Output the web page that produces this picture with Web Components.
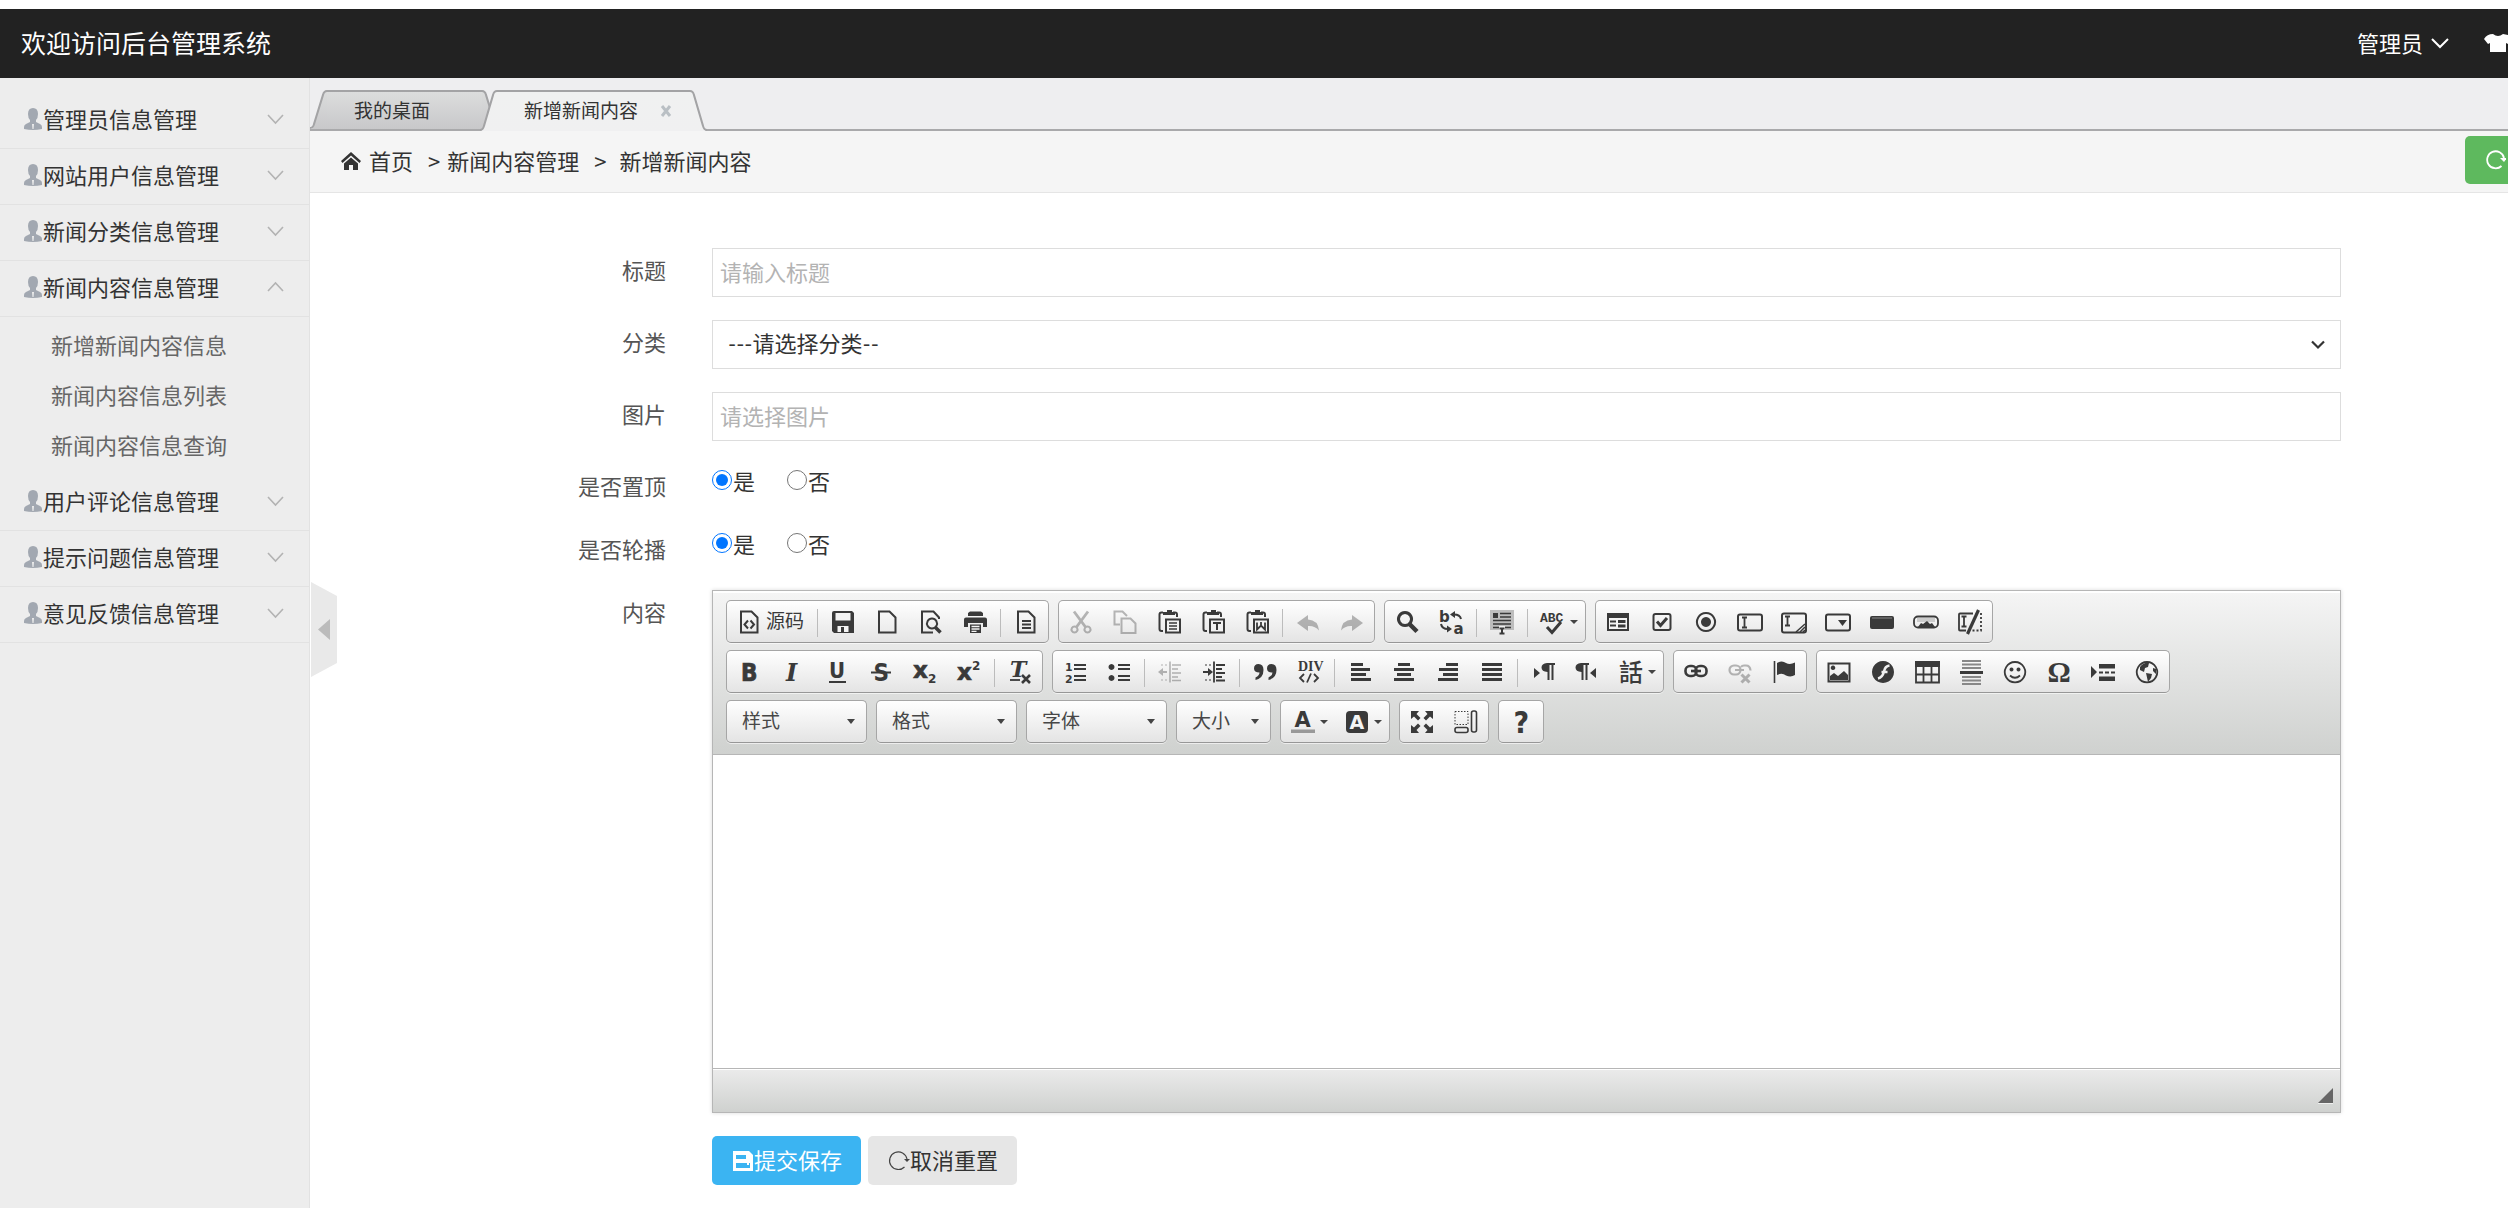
<!DOCTYPE html>
<html lang="zh-CN">
<head>
<meta charset="utf-8">
<title>新增新闻内容</title>
<style>
  html, body { margin: 0; background: #fff; }
  body { font: 22px/34px "Noto Sans CJK SC", sans-serif; color: #333; overflow: hidden; }
</style>
</head>
<body>
<admin-app></admin-app>

<script>
const define = (name, html, setup) => customElements.define(name, class extends HTMLElement {
  constructor() {
    super();
    const t = document.createElement('template');
    t.innerHTML = '<style>*{box-sizing:border-box}:host{display:block}[hidden]{display:none}button,input,select,textarea{font:inherit;color:inherit}button{cursor:pointer}a{color:inherit;text-decoration:none}svg{display:block}</style>' + html;
    this.attachShadow({ mode: 'open' }).append(t.content.cloneNode(true));
  }
  connectedCallback() { if (setup && !this.ready) { this.ready = true; setup(this, this.shadowRoot); } }
});

/* Toolbar glyphs, drawn on a 24 x 24 grid */
const S = (w, d) => `<path fill="none" stroke="currentColor" stroke-width="${w}" d="${d}"/>`;
const F = d => `<path fill="currentColor" d="${d}"/>`;
const T = (x, y, size, s, extra = '') => `<text x="${x}" y="${y}" font-size="${size}" fill="currentColor" ${extra}>${s}</text>`;
const DV = 'font-family="DejaVu Sans" font-weight="bold"';
const HEAVY = 'stroke="currentColor" stroke-width="0.7"';
const page = S(2, 'M4 1.5h10.5l6 6v15H4z');
const clip = S(2, 'M6 21H4.5q-2 0-2-2V4.5q0-2 2-2H6M16 2.5h2q2 0 2 2V7') + F('M6 5V2h4V0h5v2h3v3z') + '<rect x="8.5" y="9" width="15" height="14" fill="#f2f2f2"/>' + S(2, 'M9 9.5h14v13H9z');
const align = rows => rows.map((r, i) => F(`M${r[0]} ${3 + i * 5}h${r[1]}v3h-${r[1]}z`)).join('');
const ibeam = (x, y, h) => S(1.8, `M${x - 2.5} ${y}h5M${x} ${y}v${h}M${x - 2.5} ${y + h}h5`);
const ICONS = {
  source: page + S(2, 'M11 10.5l-3.5 4 3.5 4M13.5 10.5l3.5 4-3.5 4'),
  save: F('M3 1h18l2 2v20H3l-2-2V3a2 2 0 0 1 2-2z') + '<path fill="#f4f4f4" d="M4.5 3h15v7.5h-15zM6.5 16h11v6h-11z"/>' + F('M10 17h3v5h-3z'),
  newpage: page,
  preview: S(2, 'M20 9V7.5l-5.5-6H3v21h11') + S(2, 'M13 8.5a5 5 0 1 0 .01 0z') + S(3.5, 'M16.5 17.5l5 5'),
  print: F('M5 3l2-1.5h11L20 3v3H5zM3 7.5h19q2 0 2 2V17h-4v-4H5v4H1V9.5q0-2 2-2z') + F('M7 14.5h11V23H7z') + '<path stroke="#f4f4f4" stroke-width="1.3" d="M8.5 16.5h8M8.5 19h8M8.5 21.3h5"/>',
  template: page + S(1.8, 'M8 11h9M8 14.5h9M8 18h9'),
  cut: S(2.8, 'M5 1.5L16.5 17M19 1.5L7.5 17') + S(2, 'M5.5 16.5a3 3 0 1 0 .01 0zM18.5 16.5a3 3 0 1 0 .01 0z'),
  copy: S(2, 'M7 14.5H1.5V1.5h8l4.5 4.5') + S(2, 'M8.5 8.5h9l5 5v9.5h-14z'),
  paste: clip + S(1.6, 'M12 13h8M12 16h8M12 19h8'),
  pastetext: clip + S(2, 'M12 13h8M16 13v7'),
  pasteword: clip + S(1.8, 'M12 12.5v7l4-4 4 4v-7M16 12v4'),
  undo: F('M1 13L12 5v4.5q10 .5 11 11-4-5-11-4.5V21z'),
  redo: F('M23 13L12 5v4.5q-10 .5-11 11 4-5 11-4.5V21z'),
  find: S(3, 'M10 2.5a6.5 6.5 0 1 0 .01 0z') + S(4.5, 'M14.5 14l7.5 7.5'),
  replace: T(0, 11.5, 15, 'b', DV) + T(14.5, 24, 15, 'a', DV) + S(2, 'M22 9q-1-4.5-7-4.5M2 14q1 5 7 5') + F('M16 1v7l-5-3.5zM8 15.5v7l5-3.5z'),
  selectall: '<path fill="#bdbdbd" d="M0 0h24v20H0z"/>' + F('M3 3h5v5H3z') + S(1.5, 'M10 3.5h11M10 7h11M3 10.5h18M3 14h18M3 17.5h6M15 17.5h6') + '<path fill="#eee" d="M9 16h6v8H9z"/>' + S(2, 'M9.5 18.5h5M12 18.5v5M9.5 23.5h5'),
  spell: T(-1, 12, 13, 'ABC', 'font-family="Liberation Mono" font-weight="bold"') + S(3, 'M6 17l5 5.5L20 12'),
  form: F('M1 3h22v18H1z') + '<path fill="#f4f4f4" d="M3 8h18v11H3z"/>' + S(2, 'M4 11.5h6M4 15.5h6') + F('M12 10h7.5v3H12zM12 14.5h7.5v3H12z'),
  checkbox: '<rect x="3.5" y="4" width="17" height="16" rx="2" fill="none" stroke="currentColor" stroke-width="2"/>' + S(3, 'M7 11.5l3.5 4L17 8'),
  radio: S(2, 'M12 3a9 9 0 1 0 .01 0z') + F('M12 7a5 5 0 1 0 .01 0z'),
  textfield: '<rect x="0" y="4.5" width="24" height="16" rx="2" fill="none" stroke="currentColor" stroke-width="2"/>' + ibeam(6.5, 7.5, 10),
  textarea: '<rect x="0" y="3.5" width="24" height="19" rx="2" fill="none" stroke="currentColor" stroke-width="2"/>' + ibeam(5.5, 6.5, 9) + S(1.5, 'M14 22l9-8M18 22l5-5M21 22l2-2'),
  select: '<rect x="0" y="4.5" width="24" height="16" rx="2" fill="none" stroke="currentColor" stroke-width="2"/>' + F('M12 10h9l-4.5 6z'),
  button: '<rect x="0" y="6" width="24" height="13" rx="2" fill="currentColor"/><path stroke="#888" d="M2 8h20"/>',
  imagebutton: '<rect x="0" y="6.5" width="24" height="11" rx="4" fill="none" stroke="currentColor" stroke-width="1.8"/><path fill="#ccc" d="M3 8h18v4H3z"/>' + F('M4 17l3-4 2 1 4-3 3 3 2-1 3 4z'),
  hidden: S(1.8, 'M15 3.5H2q-1 0-1 1v15q0 1 1 1h6') + '<path fill="none" stroke="currentColor" stroke-width="1.8" stroke-dasharray="2 2" d="M23 3v17.5H13"/>' + ibeam(6, 6.5, 10) + S(3.2, 'M20.5 0l-11 24'),
  bold: T(4, 20.5, 24, 'B', 'font-family="DejaVu Sans Condensed" font-weight="bold" ' + HEAVY),
  italic: T(5, 20.5, 24, 'I', 'font-family="DejaVu Serif" font-weight="bold" font-style="italic"'),
  underline: T(4, 18, 22, 'U', 'font-family="DejaVu Sans Condensed" font-weight="bold"') + S(2, 'M4 22h17'),
  strike: T(4.5, 20.5, 24, 'S', 'font-family="DejaVu Sans Condensed" font-weight="bold"') + S(2, 'M2 12.5h20'),
  sub: T(0, 18, 23, 'x', DV + ' ' + HEAVY) + T(15, 22.5, 12, '2', DV),
  sup: T(0, 20, 23, 'x', DV + ' ' + HEAVY) + T(15, 10, 12, '2', DV),
  clear: T(2, 17, 22, 'T', 'font-family="DejaVu Serif" font-weight="bold" font-style="italic"') + S(1.8, 'M2 20h10') + S(2.6, 'M14 15l8 8M22 15l-8 8'),
  ol: T(2, 11, 11, '1', DV) + T(2, 22.5, 11, '2', DV) + S(2, 'M11 5h12M11 9h12M11 16h12M11 20h12'),
  ul: F('M4.5 4a3 3 0 1 0 .01 0zM4.5 15a3 3 0 1 0 .01 0z') + S(2, 'M11 5h12M11 9h12M11 16h12M11 20h12'),
  outdent: S(1.6, 'M12 1.5v21M14 5h9M14 9h6M14 13h9M14 17h6M14 20.5h9') + S(2, 'M2 12h7') + F('M0 12l5-4v8z') + '<path stroke="currentColor" stroke-dasharray="2 2" d="M3 5h8M3 20h8"/>',
  indent: S(1.8, 'M12 1.5v21M14 5h9M14 9h6M14 13h9M14 17h6M14 20.5h9') + S(2, 'M1 12h7') + F('M11 12L6 8v8z') + '<path stroke="currentColor" stroke-dasharray="2 2" d="M3 5h8M3 20h8"/>',
  quote: F('M5.5 4q5 0 5 6 0 8-8 10v-2.5q4-2 4-5Q1 12.5 1 8.5 1 4 5.5 4zM18.5 4q5 0 5 6 0 8-8 10v-2.5q4-2 4-5-5.5 0-5.5-4 0-4.5 4.5-4.5z'),
  div: T(1, 11, 14, 'DIV', 'font-family="Liberation Sans Narrow" font-weight="bold"') + S(1.8, 'M7 14l-4 4 4 4M17 14l4 4-4 4M14 13.5l-4 9'),
  left: align([[3, 12], [3, 19], [3, 15], [3, 20]]),
  center: align([[6, 12], [2, 20], [5, 14], [2, 20]]),
  right: align([[10, 12], [3, 19], [7, 15], [2, 20]]),
  justify: align([[2, 20], [2, 20], [2, 20], [2, 20]]),
  ltr: F('M3 8l6 5-6 5zM16 3h8v2h-1.5v15h-2V5h-2v15h-2v-8q-6-.5-6-4.5T16 3z'),
  rtl: F('M21 8l-6 5 6 5zM6 3h8v2h-1.5v15h-2V5h-2v15h-2v-8q-6-.5-6-4.5T6 3z'),
  lang: T(0, 21, 24, '話', 'font-family="Noto Sans CJK TC" font-weight="500"'),
  link: '<rect x="1.5" y="6" width="11" height="10" rx="4.5" fill="none" stroke="currentColor" stroke-width="2.6"/><rect x="11.5" y="6" width="11" height="10" rx="4.5" fill="none" stroke="currentColor" stroke-width="2.6"/>' + S(2.6, 'M7 11h10'),
  unlink: '<rect x="1.5" y="5.5" width="11" height="9" rx="4.5" fill="none" stroke="currentColor" stroke-width="2.2"/><path fill="none" stroke="currentColor" stroke-width="2.2" d="M7 10h9M13 7q1-1.5 3-1.5h2q4 0 4.5 5"/>' + S(3, 'M13.5 14.5l8 8M21.5 14.5l-8 8'),
  anchor: S(1.6, 'M2.5 1v22') + F('M5 3q5-3 9 0 4 2 9-.5V15q-4 2.5-9 .5-4-3-9-.5z'),
  image: S(2, 'M1.5 3.5h21v18h-21z') + F('M6 5.5a2.3 2.3 0 1 0 .01 0zM3 20v-4l4-3 4 3 6-5 4 4v5z'),
  flash: F('M12 1a11 11 0 1 0 .01 0z') + '<path fill="none" stroke="#f0f0f0" stroke-width="2.6" d="M18.5 5.5q-4.5.5-5.5 6-1.5 6-6 7M10.5 12h6"/>',
  table: F('M0 1h25v6H0z') + S(1.8, 'M1 6v16.5h23V6M1 14.5h23M8.5 6v17M16.5 6v17'),
  hr: '<path stroke="#888" stroke-width="1.8" d="M3 1h19M3 4.5h19M3 8h19M3 17h19M3 20.5h19M3 24h19"/>' + S(3, 'M1 12.5h23'),
  smiley: S(1.8, 'M12 2a10.2 10.2 0 1 0 .01 0z') + F('M8.5 7.5a2 2 0 1 0 .01 0zM15.5 7.5a2 2 0 1 0 .01 0z') + S(1.8, 'M7 15.5q5 4.5 10 0'),
  omega: T(0.5, 22, 29, 'Ω', 'font-family="Liberation Serif" font-weight="bold"'),
  pagebreak: F('M0 6l6 6-6 6zM8 4h16v4.5H8zM8 16.5h16V21H8z') + '<path stroke="currentColor" stroke-width="1.8" stroke-dasharray="4 2" d="M8 12.5h16"/>',
  iframe: S(1.8, 'M12 2a10.2 10.2 0 1 0 .01 0z') + F('M5 7q4-5 9-4l-1 4-3 1-1 4-4-2zM11 13l6 1-1 4-3 4zM18 8l3 1v5l-3-3z'),
  textcolor: T(3.5, 16.5, 21, 'A', DV) + '<path fill="#999" d="M0 19.5h24v3.5H0z"/>',
  bgcolor: '<rect x="1" y="1" width="22" height="22" rx="4" fill="currentColor"/><text x="4.5" y="19" font-size="19" fill="#f4f4f4" font-family="DejaVu Sans" font-weight="bold">A</text>',
  maximize: F('M1 1h8L6.5 4l4 4-2.5 2.5-4-4L1 9zM23 1v8l-3-2.5-4 4L13.5 8l4-4L15 1zM1 23v-8l3 2.5 4-4 2.5 2.5-4 4L9 23zM23 23h-8l2.5-3-4-4 2.5-2.5 4 4L23 15z'),
  blocks: '<path fill="none" stroke="currentColor" stroke-dasharray="1.5 1.5" d="M1 1.5h13v13H1z"/><rect x="17.5" y="1" width="5" height="21" rx="2" fill="none" stroke="currentColor" stroke-width="1.6"/><rect x="1" y="17.5" width="13" height="5" rx="2" fill="none" stroke="currentColor" stroke-width="1.6"/>',
  about: T(4.5, 23, 30, '?', 'font-family="DejaVu Sans Condensed" font-weight="bold"')
};

define('app-header', `<style>
  :host { background: #222; color: #fff; height: 69px; overflow: hidden; }
  header { display: flex; align-items: center; justify-content: space-between; height: 100%; padding-left: 21px; }
  strong { font-weight: 400; font-size: 25px; padding-bottom: 4px; }
  nav { display: flex; align-items: center; margin-right: -4px; padding-bottom: 2px; }
  a { display: flex; align-items: center; gap: 7px; margin-right: 34px; }
  a span { padding-bottom: 2px; }
  button { background: none; border: 0; padding: 0; }
</style>
<header><strong>欢迎访问后台管理系统</strong>
<nav><a href="#"><span>管理员</span><svg width="20" height="12"><path d="M2 2l8 8 8-8" fill="none" stroke="#fff" stroke-width="2"/></svg></a>
<button aria-label="换肤"><svg width="28" height="20"><path fill="#fff" d="M9 1q5 4 10 0l5 1 4 6-4 3-2-1v9H6v-9l-2 1-4-5q3-5 9-5z"/></svg></button></nav></header>`);

define('menu-group', `<style>
  button { display: flex; align-items: center; width: 100%; height: 56px; padding: 0 25px 3px 24px; background: none; border: 0; border-bottom: 1px solid #e2e2e2; text-align: left; }
  span { flex: 1; padding: 0 0 2px 1px; }
  :host([open]) .arrow { transform: scaleY(-1); }
  div { padding: 3px 0 5px; }
</style>
<button><svg width="18" height="22"><path fill="#a2a8b1" d="M9 0q5 0 5 6 0 4-2 6v2l4 2q2 1 2 3v2q-9 2-18 0v-2q0-2 2-3l4-2v-2Q4 10 4 6q0-6 5-6z"/><path fill="#ededed" d="M8 16h2l-.5 5h-1z"/></svg><span></span>
<svg class="arrow" width="17" height="12"><path d="M1 2l7.5 8L16 2" fill="none" stroke="#b3b3b3" stroke-width="1.6"/></svg></button>
<div><slot></slot></div>`, (el, root) => {
  root.querySelector('span').textContent = el.getAttribute('label');
  const box = root.querySelector('div');
  const sync = () => { box.hidden = !el.hasAttribute('open'); };
  root.querySelector('button').onclick = () => { el.toggleAttribute('open'); sync(); };
  sync();
});

define('side-menu', `<style>
  :host { position: relative; flex: none; width: 310px; background: #ededed; border-right: 1px solid #e2e2e2; padding-top: 15px; color: #333; }
  a { display: block; height: 50px; line-height: 48px; padding-left: 51px; color: #666; }
  .fold { position: absolute; left: 311px; top: 504px; padding: 0; border: 0; background: none; }
</style>
<nav>
<menu-group label="管理员信息管理"></menu-group>
<menu-group label="网站用户信息管理"></menu-group>
<menu-group label="新闻分类信息管理"></menu-group>
<menu-group label="新闻内容信息管理" open><a href="#">新增新闻内容信息</a><a href="#">新闻内容信息列表</a><a href="#">新闻内容信息查询</a></menu-group>
<menu-group label="用户评论信息管理"></menu-group>
<menu-group label="提示问题信息管理"></menu-group>
<menu-group label="意见反馈信息管理"></menu-group>
</nav>
<button class="fold" aria-label="收起菜单"><svg width="26" height="95"><path fill="#e9e9e9" d="M0 0l26 14v67L0 95z"/><path fill="#bbb" d="M19 37v21L7 47.5z"/></svg></button>`);

define('page-tab', `<style>
  :host { display: flex; height: 39px; font-size: 19px; --a: #dcdddd; --b: #c8c8ca; }
  :host([active]) { height: 41px; margin-left: -19px; z-index: 1; --a: #f0f1f1; --b: #f0f0f1; }
  .mid { display: flex; align-items: center; gap: 22px; padding: 0 52px 2px 27px; border-top: 2px solid #a3a3a5; background: linear-gradient(var(--a), var(--b)); }
  :host([active]) .mid { padding-right: 18px; padding-bottom: 4px; }
  svg.edge { flex: none; height: 100%; }
  button { padding: 2px 0 0; border: 0; background: none; }
  .edge .top { stop-color: var(--a); } .edge .end { stop-color: var(--b); }
</style>
<svg class="edge" width="17" viewBox="0 0 17 40" preserveAspectRatio="none"><defs><linearGradient id="g" x2="0" y2="1"><stop class="top"/><stop class="end" offset="1"/></linearGradient></defs><path fill="url(#g)" d="M17 0q-3 0-4 4L4 35q-1 5-4 5h17z"/><path fill="none" stroke="#a3a3a5" stroke-width="2" d="M17 1q-3 0-4 4L4 35q-1 4-4 4"/></svg>
<div class="mid"><a href="#"><slot></slot></a></div>
<svg class="edge" width="17" viewBox="0 0 17 40" preserveAspectRatio="none"><defs><linearGradient id="h" x2="0" y2="1"><stop class="top"/><stop class="end" offset="1"/></linearGradient></defs><path fill="url(#h)" d="M0 0q3 0 4 4l9 31q1 5 4 5H0z"/><path fill="none" stroke="#a3a3a5" stroke-width="2" d="M0 1q3 0 4 4l9 30q1 4 4 4"/></svg>`, (el, root) => {
  if (el.hasAttribute('active')) root.querySelector('.mid').insertAdjacentHTML('beforeend', '<button aria-label="关闭"><svg width="12" height="12"><path d="M2 1l8 10M10 1L2 11" stroke="#b9bfc4" stroke-width="3"/></svg></button>');
});

define('tab-bar', `<style>
  :host { display: flex; align-items: flex-start; height: 53px; padding-top: 12px; background: #eeeef0; box-shadow: inset 0 -2px #a9a9ab; }
</style><slot></slot>`);

define('crumb-bar', `<style>
  :host { display: flex; align-items: center; height: 62px; padding-left: 31px; background: #f5f5f5; border-bottom: 1px solid #e5e5e5; overflow: hidden; }
  nav { flex: 1; display: flex; align-items: center; padding-bottom: 4px; }
  .home { display: flex; align-items: center; gap: 8px; }
  .home svg { margin-top: 2px; }
  i { font-style: normal; margin: 0 7px 0 15px; }
  i + span { margin-left: 6px; }
  button { display: flex; align-items: center; width: 62px; height: 48px; padding: 0 21px; margin: 0 -19px 4px 0; border: 0; border-radius: 5px; background: #5eb95e; }
</style>
<nav><a class="home" href="#"><svg width="20" height="18" fill="#333"><path d="M10 0l10 9-1.5 2L10 3.5 1.5 11 0 9z"/><path d="M3 11.5l7-6 7 6V18h-5v-5H8v5H3z"/></svg>首页</a><i>&gt;</i><a href="#">新闻内容管理</a><i>&gt;</i><span>新增新闻内容</span></nav>
<button aria-label="刷新"><svg width="22" height="20"><path fill="none" stroke="#fff" stroke-width="1.8" d="M15.5 16A8.5 8.5 0 1 1 18 8"/><path fill="#fff" d="M14 8h7l-3 4z"/></svg></button>`);

define('tool-button', `<style>
  :host { flex: none; }
  button { display: flex; align-items: center; height: 41px; padding: 0 10px; border: 0; background: none; color: #3a3a3a; font-size: 19px; line-height: 24px; }
  button[disabled] { color: #3a3a3a; opacity: .35; }
  svg { flex: none; overflow: visible; }
  .caret { margin-left: 4px; margin-right: -4px; padding: 0; }
  :host([menu]) button { padding-right: 7px; }
  .cap { margin-left: 5px; padding-bottom: 3px; }
</style><button type="button"></button>`, (el, root) => {
  const b = root.querySelector('button');
  const cap = el.getAttribute('caption');
  b.disabled = el.hasAttribute('off');
  b.setAttribute('aria-label', cap || el.getAttribute('icon'));
  b.innerHTML = `<svg width="24" height="24" viewBox="0 0 24 24" aria-hidden="true">${ICONS[el.getAttribute('icon')]}</svg>` +
    (cap ? `<span class="cap">${cap}</span>` : '') +
    (el.hasAttribute('menu') ? '<svg class="caret" width="13" height="8"><path fill="#444" d="M1 2h8L5 6z"/></svg>' : '');
});

define('tool-group', `<style>
  :host { display: flex; height: 43px; border: 1px solid #a6a6a6; border-bottom-color: #979797; border-radius: 5px; background: linear-gradient(#fff, #e4e4e4); box-shadow: 0 1px 0 rgba(255,255,255,.6); }
  ::slotted(hr) { width: 1px; height: 28px; margin: 8px 3px 0; border: 0; background: #bcbcbc; }
</style><slot></slot>`);

define('tool-combo', `<style>
  :host { display: grid; width: 141px; height: 43px; border: 1px solid #a6a6a6; border-bottom-color: #979797; border-radius: 5px; background: linear-gradient(#fff, #e4e4e4); box-shadow: 0 1px 0 rgba(255,255,255,.6); }
  :host([narrow]) { width: 95px; }
  select, svg { grid-area: 1 / 1; }
  select { appearance: none; border: 0; background: none; padding: 0 15px 3px; font-size: 19px; color: #474747; min-width: 0; }
  svg { align-self: center; justify-self: end; margin-right: 11px; pointer-events: none; }
</style><select><option></option></select><svg width="8" height="5"><path fill="#444" d="M0 0h8L4 5z"/></svg>`, (el, root) => {
  root.querySelector('option').textContent = el.getAttribute('label');
  root.querySelector('select').setAttribute('aria-label', el.getAttribute('label'));
});

const tools = s => '<tool-group>' + s.split(' ').map(n => n === '|' ? '<hr>' :
  `<tool-button icon="${n.replace(/[!+]/, '')}"${n.endsWith('!') ? ' off' : ''}${n.endsWith('+') ? ' menu' : ''}${n === 'source' ? ' caption="源码"' : ''}></tool-button>`).join('') + '</tool-group>';

define('rich-editor', `<style>
  :host { border: 1px solid #b6b6b6; box-shadow: 0 0 4px rgba(0,0,0,.15); }
  .bar { display: flex; flex-direction: column; gap: 7px; padding: 9px 13px 11px; border-bottom: 1px solid #b6b6b6; background: linear-gradient(#f5f5f5, #cfd1cf); box-shadow: inset 0 2px #fff; }
  .row { display: flex; gap: 9px; }
  ::slotted(textarea) { display: block; box-sizing: border-box; width: 100%; height: 313px; padding: 20px; border: 0; outline: 0; resize: none; font: inherit; background: #fff; }
  footer { display: flex; justify-content: flex-end; align-items: flex-end; height: 44px; padding: 0 7px 8px; border-top: 1px solid #b6b6b6; background: linear-gradient(#ebebeb, #cfd1cf); box-shadow: inset 0 1px #fff; }
</style>
<div class="bar">
<div class="row">${tools('source | save newpage preview print | template')}${tools('cut! copy! paste pastetext pasteword | undo! redo!')}${tools('find replace | selectall | spell+')}${tools('form checkbox radio textfield textarea select button imagebutton hidden')}</div>
<div class="row">${tools('bold italic underline strike sub sup | clear')}${tools('ol ul | outdent! indent | quote div | left center right justify | ltr rtl lang+')}${tools('link unlink! anchor')}${tools('image flash table hr smiley omega pagebreak iframe')}</div>
<div class="row"><tool-combo label="样式"></tool-combo><tool-combo label="格式"></tool-combo><tool-combo label="字体"></tool-combo><tool-combo label="大小" narrow></tool-combo>${tools('textcolor+ bgcolor+')}${tools('maximize blocks')}${tools('about')}</div>
</div>
<slot></slot>
<footer><svg width="15" height="16"><path fill="#fff" opacity=".6" d="M0 15h15v1H0z"/><path fill="#666" d="M15 0v15H0z"/></svg></footer>`);

define('form-row', `<style>
  :host { display: grid; grid-template-columns: 356px minmax(0, 1fr); }
  .label { padding: 4px 46px 0 0; text-align: right; color: #555; line-height: 34px; }
</style><div class="label"><slot name="label"></slot></div><div><slot></slot></div>`);

define('news-form', `<style>
  form { display: flex; flex-direction: column; gap: 23px; padding: 55px 167px 20px 46px; }
  .text, .pick { display: block; width: 100%; height: 49px; border: 1px solid #ddd; background: #fff; outline: 0; }
  .text { padding: 0 7px 4px; }
  .text::placeholder { color: #b3b3b3; }
  .choose { display: grid; }
  .choose > * { grid-area: 1 / 1; }
  .choose svg { align-self: center; justify-self: end; margin-right: 16px; pointer-events: none; }
  .pick { appearance: none; padding: 0 15px 2px; font-family: Lato, "Noto Sans CJK SC", sans-serif; }
  .radios { display: flex; gap: 32px; height: 40px; }
  .radios label { display: flex; gap: 1px; }
  .radios input { width: 20px; height: 20px; margin: 6px 0 0; }
  .radios span { line-height: 32px; }
  .actions { display: flex; gap: 7px; }
  .actions button { display: flex; align-items: center; height: 49px; padding: 0 19px 0 20px; border: 0; border-radius: 5px; background: #e6e6e6; }
  .actions span { padding-bottom: 3px; }
  .actions .primary { background: #3bb4f2; color: #fff; }
</style>
<form>
<form-row><label slot="label" for="title">标题</label><input class="text" id="title" placeholder="请输入标题"></form-row>
<form-row><label slot="label" for="kind">分类</label><div class="choose"><select class="pick" id="kind"><option>---请选择分类--</option></select><svg width="14" height="10"><path fill="none" stroke="#333" stroke-width="2.2" d="M1 1.5l6 6 6-6"/></svg></div></form-row>
<form-row><label slot="label" for="pic">图片</label><input class="text" id="pic" placeholder="请选择图片"></form-row>
<form-row><span slot="label">是否置顶</span><div class="radios"><label><input type="radio" name="top" checked><span>是</span></label><label><input type="radio" name="top"><span>否</span></label></div></form-row>
<form-row><span slot="label">是否轮播</span><div class="radios"><label><input type="radio" name="slide" checked><span>是</span></label><label><input type="radio" name="slide"><span>否</span></label></div></form-row>
<form-row><label slot="label" for="body">内容</label><rich-editor><textarea id="body"></textarea></rich-editor></form-row>
<form-row><div class="actions">
<button class="primary" type="submit"><svg width="22" height="22"><path fill="#fff" fill-rule="evenodd" d="M1 1h16l4 4v16H1zM4 5v4h10V5zM4 13v5h14v-5zM15 13h2v2h-2z"/></svg><span>提交保存</span></button>
<button type="reset"><svg width="22" height="22"><path fill="none" stroke="#444" stroke-width="1.2" d="M16.5 17A8.8 8.8 0 1 1 19 9"/><path fill="#444" d="M16 9h6l-3 3z"/></svg><span>取消重置</span></button></div></form-row>
</form>`);

define('admin-app', `<style>
  :host { display: flex; flex-direction: column; min-height: 100vh; padding-top: 9px; box-sizing: border-box; }
  .body { flex: 1; display: flex; }
  main { flex: 1; min-width: 0; }
</style>
<app-header></app-header>
<div class="body"><side-menu></side-menu>
<main><tab-bar><page-tab>我的桌面</page-tab><page-tab active>新增新闻内容</page-tab></tab-bar>
<crumb-bar></crumb-bar>
<news-form></news-form></main></div>`);
</script>
</body>
</html>
